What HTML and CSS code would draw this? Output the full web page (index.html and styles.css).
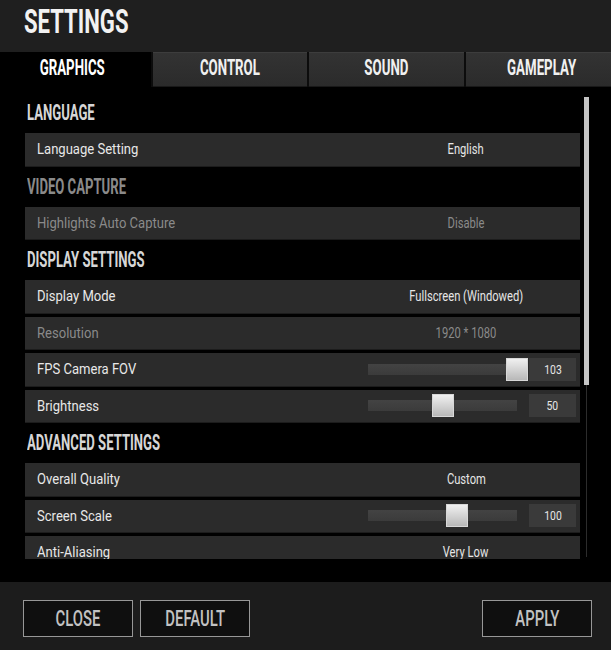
FILE: index.html
```html
<!DOCTYPE html>
<html lang="en">
<head>
<meta charset="utf-8">
<title>Settings</title>
<link rel="stylesheet" href="styles.css">
</head>
<body>
<div class="window">
  <header class="titlebar">
    <h1 class="title"><span class="cond">SETTINGS</span></h1>
  </header>
  <nav class="tabs">
    <div class="tab active"><span class="cond">GRAPHICS</span></div>
    <div class="tab"><span class="cond">CONTROL</span></div>
    <div class="tab"><span class="cond">SOUND</span></div>
    <div class="tab"><span class="cond">GAMEPLAY</span></div>
  </nav>
  <main class="content">
    <div class="list">
      <section class="group">
        <h2 class="group-title"><span class="cond">LANGUAGE</span></h2>
        <div class="rows">
          <div class="row"><span class="label"><span class="sq">Language Setting</span></span><div class="value"><span class="sqc">English</span></div></div>
        </div>
      </section>
      <section class="group disabled">
        <h2 class="group-title"><span class="cond">VIDEO CAPTURE</span></h2>
        <div class="rows">
          <div class="row off"><span class="label"><span class="sq">Highlights Auto Capture</span></span><div class="value"><span class="sqc">Disable</span></div></div>
        </div>
      </section>
      <section class="group">
        <h2 class="group-title"><span class="cond">DISPLAY SETTINGS</span></h2>
        <div class="rows">
          <div class="row"><span class="label"><span class="sq">Display Mode</span></span><div class="value"><span class="sqc">Fullscreen (Windowed)</span></div></div>
          <div class="row off"><span class="label"><span class="sq">Resolution</span></span><div class="value"><span class="sqc">1920 * 1080</span></div></div>
          <div class="row"><span class="label"><span class="sq">FPS Camera FOV</span></span>
            <div class="value slider">
              <div class="track"><div class="knob" style="left: calc(100% - 11px)"></div></div>
              <div class="num"><span class="sqc">103</span></div>
            </div>
          </div>
          <div class="row"><span class="label"><span class="sq">Brightness</span></span>
            <div class="value slider">
              <div class="track"><div class="knob" style="left: calc(50% - 11px)"></div></div>
              <div class="num"><span class="sqc">50</span></div>
            </div>
          </div>
        </div>
      </section>
      <section class="group">
        <h2 class="group-title"><span class="cond">ADVANCED SETTINGS</span></h2>
        <div class="rows">
          <div class="row"><span class="label"><span class="sq">Overall Quality</span></span><div class="value"><span class="sqc">Custom</span></div></div>
          <div class="row"><span class="label"><span class="sq">Screen Scale</span></span>
            <div class="value slider">
              <div class="track"><div class="knob" style="left: calc(60% - 11px)"></div></div>
              <div class="num"><span class="sqc">100</span></div>
            </div>
          </div>
          <div class="row"><span class="label"><span class="sq">Anti-Aliasing</span></span><div class="value"><span class="sqc">Very Low</span></div></div>
        </div>
      </section>
    </div>
    <div class="scrollbar">
      <div class="scroll-thumb"></div>
      <div class="scroll-track"></div>
    </div>
  </main>
  <footer class="footer">
    <button class="btn"><span class="cond">CLOSE</span></button>
    <button class="btn"><span class="cond">DEFAULT</span></button>
    <button class="btn apply"><span class="cond">APPLY</span></button>
  </footer>
</div>
</body>
</html>
```

FILE: styles.css
```css
* { box-sizing: border-box; }

html, body {
  margin: 0;
  padding: 0;
  background: #000;
}

body {
  font-family: Roboto, "Liberation Sans", sans-serif;
  color: #e4e4e4;
}

.window {
  width: 611px;
  height: 650px;
  display: flex;
  flex-direction: column;
  overflow: hidden;
}

.cond {
  display: inline-block;
  font-family: Roboto, "Liberation Sans", sans-serif;
  font-weight: 700;
  white-space: nowrap;
  transform: scaleX(0.6);
}

.sq {
  display: inline-block;
  white-space: nowrap;
  transform: scaleX(0.87);
  transform-origin: left center;
}

.sqc {
  display: inline-block;
  white-space: nowrap;
  transform: scaleX(0.8);
  transform-origin: center center;
}

/* title bar */
.titlebar {
  height: 52px;
  flex: none;
  background: #1f1f1f;
  padding: 4px 0 0 24px;
}

.title {
  margin: 0;
  font-size: 34px;
  line-height: 34px;
  font-weight: 700;
  color: #f2f2f2;
}

.title .cond {
  transform: scaleX(0.65);
  transform-origin: left center;
}

/* tabs */
.tabs {
  height: 35px;
  flex: none;
  display: grid;
  grid-template-columns: 151px 154px 155px 1fr;
  column-gap: 2px;
  background: #0c0c0c;
}

.tab {
  display: flex;
  align-items: center;
  justify-content: center;
  padding-bottom: 5px;
  font-size: 22.5px;
  line-height: 24px;
  color: #f0f0f0;
  background: linear-gradient(#333333, #2b2b2b);
  border-top: 1px solid #3d3d3d;
  border-bottom: 1px solid #191919;
}

.tab .cond {
  transform: scaleX(0.59);
}

.tab.active {
  background: #000;
  border-color: #000;
  color: #fff;
  padding-right: 6px;
}

.tab:last-child {
  padding-left: 6px;
}

/* content */
.content {
  flex: 1;
  display: flex;
  padding: 6px 0 23px 25px;
  background: #000;
  min-height: 0;
}

.list {
  width: 555px;
  flex: none;
  overflow: hidden;
}

.group-title {
  margin: 0;
  height: 40px;
  display: flex;
  align-items: center;
  padding-left: 2px;
  font-size: 21.5px;
  line-height: 22px;
  color: #d6d6d6;
}

.group-title .cond {
  transform: scaleX(0.61);
  transform-origin: left center;
}

.group.disabled .group-title {
  color: #8a8a8a;
}

.rows {
  display: flex;
  flex-direction: column;
  gap: 3px;
}

.row {
  height: 33.5px;
  display: flex;
  align-items: center;
  background: #2b2b2b;
  border-bottom: 1px solid #1c1c1c;
}

.label {
  flex: 1;
  padding-left: 12px;
  font-size: 15px;
  color: #e8e8e8;
}

.value {
  width: 228px;
  flex: none;
  text-align: center;
  font-size: 14px;
  color: #e6e6e6;
}

.row.off .label,
.row.off .value {
  color: #8a8a8a;
}

/* sliders */
.slider {
  display: flex;
  align-items: center;
  padding: 0 4px 0 16px;
}

.track {
  position: relative;
  width: 149px;
  height: 11px;
  background: linear-gradient(#434343, #3b3b3b);
}

.knob {
  position: absolute;
  top: -6px;
  width: 22px;
  height: 23px;
  background: linear-gradient(#f0f0f0, #b8b8b8);
  border: 1px solid #d8d8d8;
}

.num {
  margin-left: 12px;
  width: 47px;
  height: 23px;
  display: flex;
  align-items: center;
  justify-content: center;
  background: #3a3a3a;
  font-size: 13px;
  color: #e6e6e6;
}

/* scrollbar */
.scrollbar {
  width: 5px;
  margin-left: 4px;
  padding-top: 4px;
  display: flex;
  flex-direction: column;
}

.scroll-thumb {
  height: 288px;
  background: #c4c4c4;
}

.scroll-track {
  width: 1px;
  margin-left: 2px;
  height: 172px;
  background: #2c2c2c;
}

/* footer */
.footer {
  height: 68px;
  flex: none;
  display: flex;
  align-items: flex-start;
  gap: 7px;
  padding: 18px 19px 0 23px;
  background: #1c1c1c;
}

.btn {
  width: 110px;
  height: 37px;
  padding: 0 0 1px;
  display: flex;
  align-items: center;
  justify-content: center;
  background: #0f0f0f;
  border: 1px solid #979797;
  color: #c2c2c2;
  font-size: 22.5px;
  line-height: 24px;
  cursor: pointer;
}

.btn .cond {
  font-weight: 500;
  transform: scaleX(0.66);
}

.btn.apply {
  margin-left: auto;
}
```
